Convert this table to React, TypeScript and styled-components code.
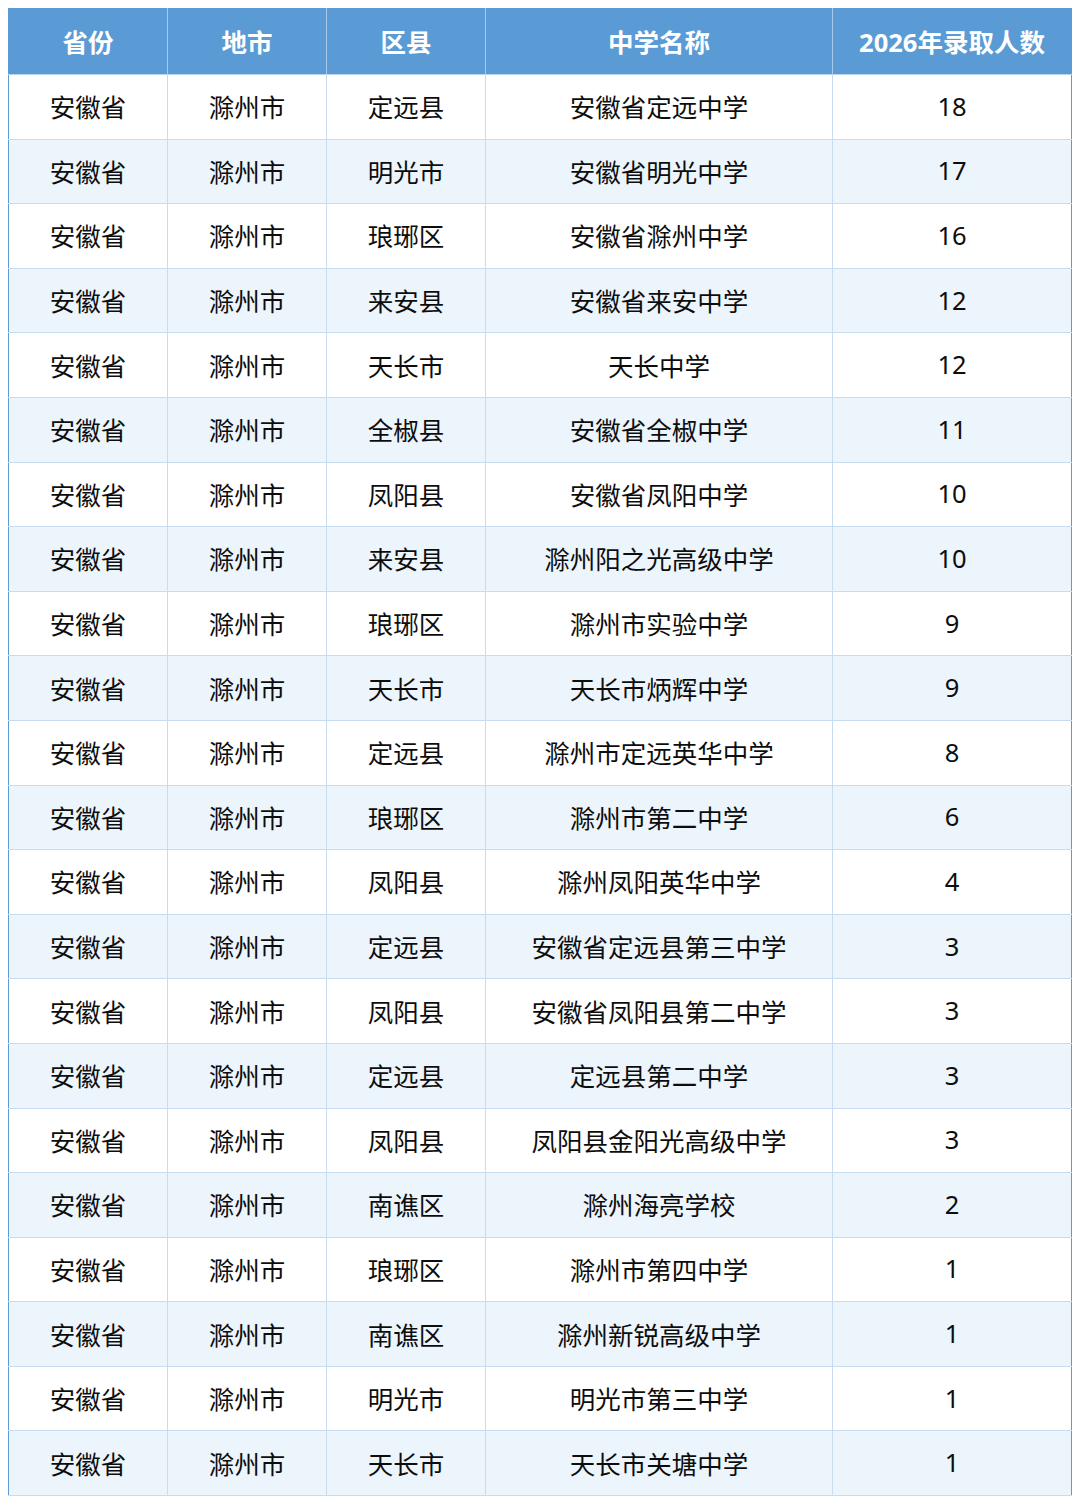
import React from "react";
import styled, { createGlobalStyle } from "styled-components";

const Global = createGlobalStyle`
  html, body { margin: 0; padding: 0; background: #ffffff; }
  body { padding: 8px; font-family: "Noto Sans", "Noto Sans CJK SC", sans-serif; }
`;

const Table = styled.table`
  width: 1063px;
  table-layout: fixed;
  border-collapse: collapse;
  border: 1px solid #5b9bd5;
  font-family: "Noto Sans", "Noto Sans CJK SC", sans-serif;
`;

const HeadRow = styled.tr`
  height: 66px;
`;

const HeadCell = styled.th`
  padding: 0 0 3px;
  background: #5b9bd5;
  color: #ffffff;
  font-size: 25.5px;
  font-weight: 700;
  text-align: center;
  vertical-align: middle;
  border-left: 1px solid #a9c9ea;
  border-bottom: 1px solid #bcd5ee;
  &:first-child { border-left: none; }
`;

const Row = styled.tr<{ $alt: boolean }>`
  height: 64.6px;
  background: ${(p) => (p.$alt ? "#ecf4fc" : "#ffffff")};
`;

const Cell = styled.td`
  padding: 0 0 2px;
  color: #0d0d0d;
  font-size: 25.5px;
  text-align: center;
  vertical-align: middle;
  border: 1px solid #c8dcf1;
  &:first-child { border-left: 1px solid #5b9bd5; }
  &:last-child { border-right: 1px solid #5b9bd5; }
`;

const cols = [159, 159, 159, 347, 239];
const heads = ["省份", "地市", "区县", "中学名称", "2026年录取人数"];

const rows: [string, string, string][] = [
  ["定远县", "安徽省定远中学", "18"],
  ["明光市", "安徽省明光中学", "17"],
  ["琅琊区", "安徽省滁州中学", "16"],
  ["来安县", "安徽省来安中学", "12"],
  ["天长市", "天长中学", "12"],
  ["全椒县", "安徽省全椒中学", "11"],
  ["凤阳县", "安徽省凤阳中学", "10"],
  ["来安县", "滁州阳之光高级中学", "10"],
  ["琅琊区", "滁州市实验中学", "9"],
  ["天长市", "天长市炳辉中学", "9"],
  ["定远县", "滁州市定远英华中学", "8"],
  ["琅琊区", "滁州市第二中学", "6"],
  ["凤阳县", "滁州凤阳英华中学", "4"],
  ["定远县", "安徽省定远县第三中学", "3"],
  ["凤阳县", "安徽省凤阳县第二中学", "3"],
  ["定远县", "定远县第二中学", "3"],
  ["凤阳县", "凤阳县金阳光高级中学", "3"],
  ["南谯区", "滁州海亮学校", "2"],
  ["琅琊区", "滁州市第四中学", "1"],
  ["南谯区", "滁州新锐高级中学", "1"],
  ["明光市", "明光市第三中学", "1"],
  ["天长市", "天长市关塘中学", "1"],
];

export default function App() {
  return (
    <>
      <Global />
      <Table>
        <colgroup>
          {cols.map((w, i) => (
            <col key={i} style={{ width: w }} />
          ))}
        </colgroup>
        <thead>
          <HeadRow>
            {heads.map((h) => (
              <HeadCell key={h}>{h}</HeadCell>
            ))}
          </HeadRow>
        </thead>
        <tbody>
          {rows.map((r, i) => (
            <Row key={i} $alt={i % 2 === 1}>
              <Cell>安徽省</Cell>
              <Cell>滁州市</Cell>
              <Cell>{r[0]}</Cell>
              <Cell>{r[1]}</Cell>
              <Cell>{r[2]}</Cell>
            </Row>
          ))}
        </tbody>
      </Table>
    </>
  );
}
